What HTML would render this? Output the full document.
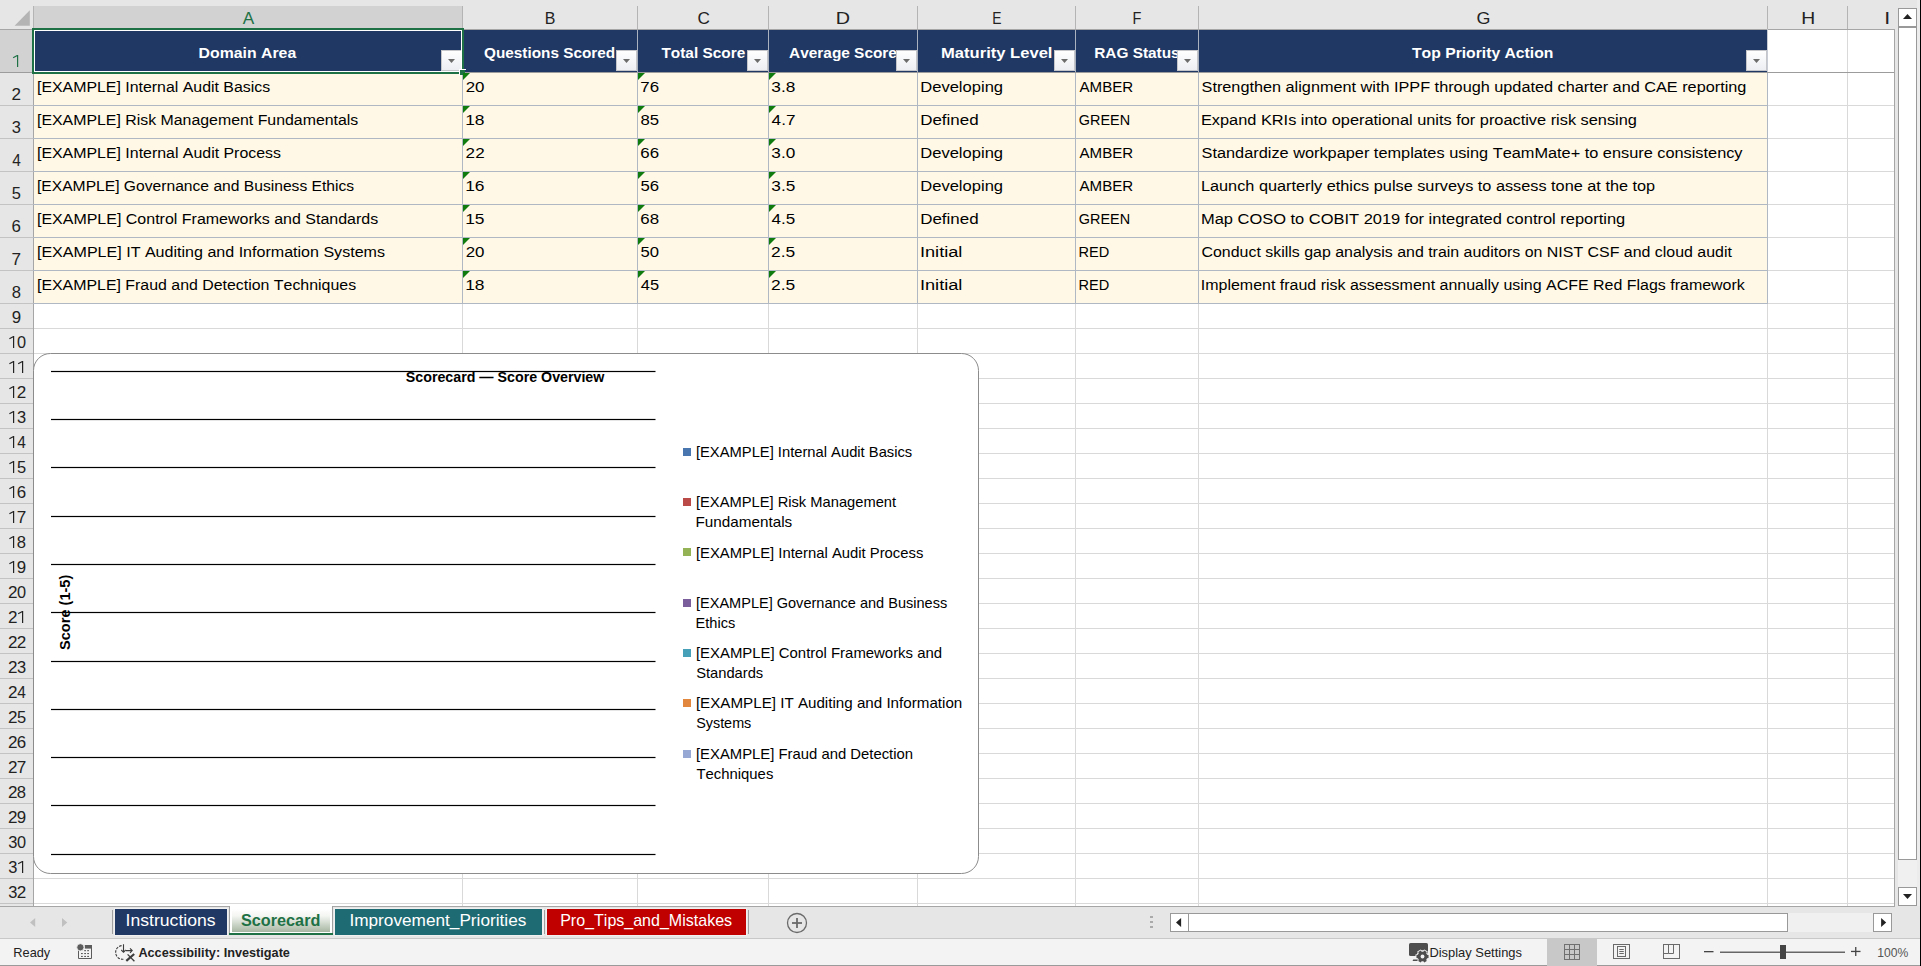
<!DOCTYPE html>
<html><head><meta charset="utf-8"><title>Scorecard</title>
<style>
html,body{margin:0;padding:0;background:#fff;overflow:hidden;}
svg{display:block;}
text{font-family:"Liberation Sans",sans-serif;font-kerning:none;font-variant-ligatures:none;white-space:pre;}
</style></head><body>
<svg width="1921" height="966" viewBox="0 0 1921 966" shape-rendering="auto">
<rect x="0" y="0" width="1921" height="966" fill="#ffffff" />
<rect x="0" y="0" width="1921" height="29" fill="#e6e6e6" />
<rect x="34" y="6" width="428" height="22" fill="#d2d2d2" />
<rect x="0" y="29" width="33" height="877" fill="#e6e6e6" />
<rect x="0" y="30" width="33" height="42" fill="#d2d2d2" />
<polygon points="14.6,25.8 29.8,25.8 29.8,10.2" fill="#b4b4b4"/>
<rect x="462" y="29" width="1" height="877" fill="#d9d9d9" />
<rect x="637" y="29" width="1" height="877" fill="#d9d9d9" />
<rect x="768" y="29" width="1" height="877" fill="#d9d9d9" />
<rect x="917" y="29" width="1" height="877" fill="#d9d9d9" />
<rect x="1075" y="29" width="1" height="877" fill="#d9d9d9" />
<rect x="1198" y="29" width="1" height="877" fill="#d9d9d9" />
<rect x="1767" y="29" width="1" height="877" fill="#d9d9d9" />
<rect x="1847" y="29" width="1" height="877" fill="#d9d9d9" />
<rect x="33" y="72" width="1861" height="1" fill="#d9d9d9" />
<rect x="33" y="105" width="1861" height="1" fill="#d9d9d9" />
<rect x="33" y="138" width="1861" height="1" fill="#d9d9d9" />
<rect x="33" y="171" width="1861" height="1" fill="#d9d9d9" />
<rect x="33" y="204" width="1861" height="1" fill="#d9d9d9" />
<rect x="33" y="237" width="1861" height="1" fill="#d9d9d9" />
<rect x="33" y="270" width="1861" height="1" fill="#d9d9d9" />
<rect x="33" y="303" width="1861" height="1" fill="#d9d9d9" />
<rect x="33" y="328" width="1861" height="1" fill="#d9d9d9" />
<rect x="33" y="353" width="1861" height="1" fill="#d9d9d9" />
<rect x="33" y="378" width="1861" height="1" fill="#d9d9d9" />
<rect x="33" y="403" width="1861" height="1" fill="#d9d9d9" />
<rect x="33" y="428" width="1861" height="1" fill="#d9d9d9" />
<rect x="33" y="453" width="1861" height="1" fill="#d9d9d9" />
<rect x="33" y="478" width="1861" height="1" fill="#d9d9d9" />
<rect x="33" y="503" width="1861" height="1" fill="#d9d9d9" />
<rect x="33" y="528" width="1861" height="1" fill="#d9d9d9" />
<rect x="33" y="553" width="1861" height="1" fill="#d9d9d9" />
<rect x="33" y="578" width="1861" height="1" fill="#d9d9d9" />
<rect x="33" y="603" width="1861" height="1" fill="#d9d9d9" />
<rect x="33" y="628" width="1861" height="1" fill="#d9d9d9" />
<rect x="33" y="653" width="1861" height="1" fill="#d9d9d9" />
<rect x="33" y="678" width="1861" height="1" fill="#d9d9d9" />
<rect x="33" y="703" width="1861" height="1" fill="#d9d9d9" />
<rect x="33" y="728" width="1861" height="1" fill="#d9d9d9" />
<rect x="33" y="753" width="1861" height="1" fill="#d9d9d9" />
<rect x="33" y="778" width="1861" height="1" fill="#d9d9d9" />
<rect x="33" y="803" width="1861" height="1" fill="#d9d9d9" />
<rect x="33" y="828" width="1861" height="1" fill="#d9d9d9" />
<rect x="33" y="853" width="1861" height="1" fill="#d9d9d9" />
<rect x="33" y="878" width="1861" height="1" fill="#d9d9d9" />
<rect x="33" y="903" width="1861" height="1" fill="#d9d9d9" />
<rect x="33" y="6" width="1" height="23" fill="#b4b4b4" />
<rect x="462" y="6" width="1" height="23" fill="#b4b4b4" />
<rect x="637" y="6" width="1" height="23" fill="#b4b4b4" />
<rect x="768" y="6" width="1" height="23" fill="#b4b4b4" />
<rect x="917" y="6" width="1" height="23" fill="#b4b4b4" />
<rect x="1075" y="6" width="1" height="23" fill="#b4b4b4" />
<rect x="1198" y="6" width="1" height="23" fill="#b4b4b4" />
<rect x="1767" y="6" width="1" height="23" fill="#b4b4b4" />
<rect x="1847" y="6" width="1" height="23" fill="#b4b4b4" />
<rect x="0" y="72" width="33" height="1" fill="#c3c3c3" />
<rect x="0" y="105" width="33" height="1" fill="#c3c3c3" />
<rect x="0" y="138" width="33" height="1" fill="#c3c3c3" />
<rect x="0" y="171" width="33" height="1" fill="#c3c3c3" />
<rect x="0" y="204" width="33" height="1" fill="#c3c3c3" />
<rect x="0" y="237" width="33" height="1" fill="#c3c3c3" />
<rect x="0" y="270" width="33" height="1" fill="#c3c3c3" />
<rect x="0" y="303" width="33" height="1" fill="#c3c3c3" />
<rect x="0" y="328" width="33" height="1" fill="#c3c3c3" />
<rect x="0" y="353" width="33" height="1" fill="#c3c3c3" />
<rect x="0" y="378" width="33" height="1" fill="#c3c3c3" />
<rect x="0" y="403" width="33" height="1" fill="#c3c3c3" />
<rect x="0" y="428" width="33" height="1" fill="#c3c3c3" />
<rect x="0" y="453" width="33" height="1" fill="#c3c3c3" />
<rect x="0" y="478" width="33" height="1" fill="#c3c3c3" />
<rect x="0" y="503" width="33" height="1" fill="#c3c3c3" />
<rect x="0" y="528" width="33" height="1" fill="#c3c3c3" />
<rect x="0" y="553" width="33" height="1" fill="#c3c3c3" />
<rect x="0" y="578" width="33" height="1" fill="#c3c3c3" />
<rect x="0" y="603" width="33" height="1" fill="#c3c3c3" />
<rect x="0" y="628" width="33" height="1" fill="#c3c3c3" />
<rect x="0" y="653" width="33" height="1" fill="#c3c3c3" />
<rect x="0" y="678" width="33" height="1" fill="#c3c3c3" />
<rect x="0" y="703" width="33" height="1" fill="#c3c3c3" />
<rect x="0" y="728" width="33" height="1" fill="#c3c3c3" />
<rect x="0" y="753" width="33" height="1" fill="#c3c3c3" />
<rect x="0" y="778" width="33" height="1" fill="#c3c3c3" />
<rect x="0" y="803" width="33" height="1" fill="#c3c3c3" />
<rect x="0" y="828" width="33" height="1" fill="#c3c3c3" />
<rect x="0" y="853" width="33" height="1" fill="#c3c3c3" />
<rect x="0" y="878" width="33" height="1" fill="#c3c3c3" />
<rect x="0" y="903" width="33" height="1" fill="#c3c3c3" />
<rect x="0" y="29" width="1895" height="1" fill="#a6a6a6" />
<rect x="33" y="29" width="1" height="877" fill="#a6a6a6" />
<rect x="1894" y="29" width="1" height="877" fill="#a6a6a6" />
<rect x="34" y="30" width="1733" height="42" fill="#203864" />
<rect x="34" y="73" width="1733" height="230" fill="#fff8e6" />
<rect x="462" y="30" width="1" height="274" fill="#b0b8c4" />
<rect x="637" y="30" width="1" height="274" fill="#b0b8c4" />
<rect x="768" y="30" width="1" height="274" fill="#b0b8c4" />
<rect x="917" y="30" width="1" height="274" fill="#b0b8c4" />
<rect x="1075" y="30" width="1" height="274" fill="#b0b8c4" />
<rect x="1198" y="30" width="1" height="274" fill="#b0b8c4" />
<rect x="1767" y="30" width="1" height="274" fill="#b0b8c4" />
<rect x="33" y="72" width="1735" height="1" fill="#b0b8c4" />
<rect x="33" y="105" width="1735" height="1" fill="#b0b8c4" />
<rect x="33" y="138" width="1735" height="1" fill="#b0b8c4" />
<rect x="33" y="171" width="1735" height="1" fill="#b0b8c4" />
<rect x="33" y="204" width="1735" height="1" fill="#b0b8c4" />
<rect x="33" y="237" width="1735" height="1" fill="#b0b8c4" />
<rect x="33" y="270" width="1735" height="1" fill="#b0b8c4" />
<rect x="33" y="303" width="1735" height="1" fill="#b0b8c4" />
<rect x="462" y="30" width="1" height="42" fill="#aab2c0" />
<rect x="637" y="30" width="1" height="42" fill="#aab2c0" />
<rect x="768" y="30" width="1" height="42" fill="#aab2c0" />
<rect x="917" y="30" width="1" height="42" fill="#aab2c0" />
<rect x="1075" y="30" width="1" height="42" fill="#aab2c0" />
<rect x="1198" y="30" width="1" height="42" fill="#aab2c0" />
<rect x="1767" y="29" width="1" height="43" fill="#c8ccd4" />
<rect x="0" y="72" width="1894" height="1" fill="#9c9c9c" />
<rect x="616.5" y="50.5" width="20" height="20" fill="url(#fb)" stroke="#c4c6ca" stroke-width="1"/>
<polygon points="623.0,59 630.0,59 626.5,63" fill="#6c6c6c"/>
<rect x="747.5" y="50.5" width="20" height="20" fill="url(#fb)" stroke="#c4c6ca" stroke-width="1"/>
<polygon points="754.0,59 761.0,59 757.5,63" fill="#6c6c6c"/>
<rect x="896.5" y="50.5" width="20" height="20" fill="url(#fb)" stroke="#c4c6ca" stroke-width="1"/>
<polygon points="903.0,59 910.0,59 906.5,63" fill="#6c6c6c"/>
<rect x="1054.5" y="50.5" width="20" height="20" fill="url(#fb)" stroke="#c4c6ca" stroke-width="1"/>
<polygon points="1061.0,59 1068.0,59 1064.5,63" fill="#6c6c6c"/>
<rect x="1177.5" y="50.5" width="20" height="20" fill="url(#fb)" stroke="#c4c6ca" stroke-width="1"/>
<polygon points="1184.0,59 1191.0,59 1187.5,63" fill="#6c6c6c"/>
<rect x="1746.5" y="50.5" width="20" height="20" fill="url(#fb)" stroke="#c4c6ca" stroke-width="1"/>
<polygon points="1753.0,59 1760.0,59 1756.5,63" fill="#6c6c6c"/>
<rect x="441.5" y="50.5" width="20" height="20" fill="url(#fb)" stroke="#c4c6ca" stroke-width="1"/>
<polygon points="448.0,59 455.0,59 451.5,63" fill="#6c6c6c"/>
<rect x="33" y="29" width="430" height="44" fill="none" stroke="#1e7145" stroke-width="2"/>
<rect x="34.5" y="30.5" width="427" height="41" fill="none" stroke="#ffffff" stroke-width="1"/>
<rect x="459" y="69" width="7" height="1" fill="#ffffff" />
<rect x="459" y="69" width="1" height="7" fill="#ffffff" />
<rect x="460" y="70" width="5" height="5" fill="#1e7145" />
<polygon points="463,73 470,73 463,80" fill="#0f7b0f"/>
<polygon points="638,73 645,73 638,80" fill="#0f7b0f"/>
<polygon points="769,73 776,73 769,80" fill="#0f7b0f"/>
<polygon points="463,106 470,106 463,113" fill="#0f7b0f"/>
<polygon points="638,106 645,106 638,113" fill="#0f7b0f"/>
<polygon points="769,106 776,106 769,113" fill="#0f7b0f"/>
<polygon points="463,139 470,139 463,146" fill="#0f7b0f"/>
<polygon points="638,139 645,139 638,146" fill="#0f7b0f"/>
<polygon points="769,139 776,139 769,146" fill="#0f7b0f"/>
<polygon points="463,172 470,172 463,179" fill="#0f7b0f"/>
<polygon points="638,172 645,172 638,179" fill="#0f7b0f"/>
<polygon points="769,172 776,172 769,179" fill="#0f7b0f"/>
<polygon points="463,205 470,205 463,212" fill="#0f7b0f"/>
<polygon points="638,205 645,205 638,212" fill="#0f7b0f"/>
<polygon points="769,205 776,205 769,212" fill="#0f7b0f"/>
<polygon points="463,238 470,238 463,245" fill="#0f7b0f"/>
<polygon points="638,238 645,238 638,245" fill="#0f7b0f"/>
<polygon points="769,238 776,238 769,245" fill="#0f7b0f"/>
<polygon points="463,271 470,271 463,278" fill="#0f7b0f"/>
<polygon points="638,271 645,271 638,278" fill="#0f7b0f"/>
<polygon points="769,271 776,271 769,278" fill="#0f7b0f"/>
<text x="198.64" y="57.90" font-size="15.5" font-weight="bold" fill="#fff" textLength="97.56" lengthAdjust="spacingAndGlyphs" >Domain Area</text>
<text x="484.07" y="57.90" font-size="15.5" font-weight="bold" fill="#fff" textLength="131.04" lengthAdjust="spacingAndGlyphs" >Questions Scored</text>
<text x="661.43" y="57.90" font-size="15.5" font-weight="bold" fill="#fff" textLength="83.80" lengthAdjust="spacingAndGlyphs" >Total Score</text>
<text x="789.12" y="57.90" font-size="15.5" font-weight="bold" fill="#fff" textLength="107.77" lengthAdjust="spacingAndGlyphs" >Average Score</text>
<text x="941.09" y="57.90" font-size="15.5" font-weight="bold" fill="#fff" textLength="111.38" lengthAdjust="spacingAndGlyphs" >Maturity Level</text>
<text x="1094.17" y="57.90" font-size="15.5" font-weight="bold" fill="#fff" textLength="85.50" lengthAdjust="spacingAndGlyphs" >RAG Status</text>
<text x="1412.02" y="57.90" font-size="15.5" font-weight="bold" fill="#fff" textLength="141.35" lengthAdjust="spacingAndGlyphs" >Top Priority Action</text>
<rect x="896.5" y="50.5" width="20" height="20" fill="url(#fb)" stroke="#c4c6ca" stroke-width="1"/>
<polygon points="903.0,59 910.0,59 906.5,63" fill="#6c6c6c"/>
<rect x="1177.5" y="50.5" width="20" height="20" fill="url(#fb)" stroke="#c4c6ca" stroke-width="1"/>
<polygon points="1184.0,59 1191.0,59 1187.5,63" fill="#6c6c6c"/>
<text x="36.97" y="92.00" font-size="15.5" fill="#000000" textLength="233.21" lengthAdjust="spacingAndGlyphs" >[EXAMPLE] Internal Audit Basics</text>
<text x="465.65" y="92.00" font-size="15.5" fill="#000000" textLength="18.81" lengthAdjust="spacingAndGlyphs" >20</text>
<text x="640.33" y="92.00" font-size="15.5" fill="#000000" textLength="18.81" lengthAdjust="spacingAndGlyphs" >76</text>
<text x="771.34" y="92.00" font-size="15.5" fill="#000000" textLength="24.01" lengthAdjust="spacingAndGlyphs" >3.8</text>
<text x="920.24" y="92.00" font-size="15.5" fill="#000000" textLength="82.82" lengthAdjust="spacingAndGlyphs" >Developing</text>
<text x="1079.57" y="92.00" font-size="15.5" fill="#000000" textLength="53.63" lengthAdjust="spacingAndGlyphs" >AMBER</text>
<text x="1201.56" y="92.00" font-size="15.5" fill="#000000" textLength="544.79" lengthAdjust="spacingAndGlyphs" >Strengthen alignment with IPPF through updated charter and CAE reporting</text>
<text x="36.97" y="125.00" font-size="15.5" fill="#000000" textLength="321.31" lengthAdjust="spacingAndGlyphs" >[EXAMPLE] Risk Management Fundamentals</text>
<text x="465.17" y="125.00" font-size="15.5" fill="#000000" textLength="19.38" lengthAdjust="spacingAndGlyphs" >18</text>
<text x="640.47" y="125.00" font-size="15.5" fill="#000000" textLength="18.63" lengthAdjust="spacingAndGlyphs" >85</text>
<text x="771.61" y="125.00" font-size="15.5" fill="#000000" textLength="23.86" lengthAdjust="spacingAndGlyphs" >4.7</text>
<text x="920.21" y="125.00" font-size="15.5" fill="#000000" textLength="58.38" lengthAdjust="spacingAndGlyphs" >Defined</text>
<text x="1078.87" y="125.00" font-size="15.5" fill="#000000" textLength="51.30" lengthAdjust="spacingAndGlyphs" >GREEN</text>
<text x="1200.96" y="125.00" font-size="15.5" fill="#000000" textLength="435.99" lengthAdjust="spacingAndGlyphs" >Expand KRIs into operational units for proactive risk sensing</text>
<text x="36.97" y="158.00" font-size="15.5" fill="#000000" textLength="244.01" lengthAdjust="spacingAndGlyphs" >[EXAMPLE] Internal Audit Process</text>
<text x="465.64" y="158.00" font-size="15.5" fill="#000000" textLength="19.02" lengthAdjust="spacingAndGlyphs" >22</text>
<text x="640.34" y="158.00" font-size="15.5" fill="#000000" textLength="18.80" lengthAdjust="spacingAndGlyphs" >66</text>
<text x="771.34" y="158.00" font-size="15.5" fill="#000000" textLength="23.93" lengthAdjust="spacingAndGlyphs" >3.0</text>
<text x="920.24" y="158.00" font-size="15.5" fill="#000000" textLength="82.82" lengthAdjust="spacingAndGlyphs" >Developing</text>
<text x="1079.57" y="158.00" font-size="15.5" fill="#000000" textLength="53.63" lengthAdjust="spacingAndGlyphs" >AMBER</text>
<text x="1201.56" y="158.00" font-size="15.5" fill="#000000" textLength="540.97" lengthAdjust="spacingAndGlyphs" >Standardize workpaper templates using TeamMate+ to ensure consistency</text>
<text x="36.99" y="191.00" font-size="15.5" fill="#000000" textLength="317.18" lengthAdjust="spacingAndGlyphs" >[EXAMPLE] Governance and Business Ethics</text>
<text x="465.17" y="191.00" font-size="15.5" fill="#000000" textLength="19.39" lengthAdjust="spacingAndGlyphs" >16</text>
<text x="640.53" y="191.00" font-size="15.5" fill="#000000" textLength="18.60" lengthAdjust="spacingAndGlyphs" >56</text>
<text x="771.34" y="191.00" font-size="15.5" fill="#000000" textLength="23.98" lengthAdjust="spacingAndGlyphs" >3.5</text>
<text x="920.24" y="191.00" font-size="15.5" fill="#000000" textLength="82.82" lengthAdjust="spacingAndGlyphs" >Developing</text>
<text x="1079.57" y="191.00" font-size="15.5" fill="#000000" textLength="53.63" lengthAdjust="spacingAndGlyphs" >AMBER</text>
<text x="1200.96" y="191.00" font-size="15.5" fill="#000000" textLength="454.22" lengthAdjust="spacingAndGlyphs" >Launch quarterly ethics pulse surveys to assess tone at the top</text>
<text x="36.96" y="224.00" font-size="15.5" fill="#000000" textLength="341.22" lengthAdjust="spacingAndGlyphs" >[EXAMPLE] Control Frameworks and Standards</text>
<text x="465.17" y="224.00" font-size="15.5" fill="#000000" textLength="19.36" lengthAdjust="spacingAndGlyphs" >15</text>
<text x="640.34" y="224.00" font-size="15.5" fill="#000000" textLength="18.79" lengthAdjust="spacingAndGlyphs" >68</text>
<text x="771.61" y="224.00" font-size="15.5" fill="#000000" textLength="23.71" lengthAdjust="spacingAndGlyphs" >4.5</text>
<text x="920.21" y="224.00" font-size="15.5" fill="#000000" textLength="58.38" lengthAdjust="spacingAndGlyphs" >Defined</text>
<text x="1078.87" y="224.00" font-size="15.5" fill="#000000" textLength="51.30" lengthAdjust="spacingAndGlyphs" >GREEN</text>
<text x="1200.95" y="224.00" font-size="15.5" fill="#000000" textLength="424.31" lengthAdjust="spacingAndGlyphs" >Map COSO to COBIT 2019 for integrated control reporting</text>
<text x="36.96" y="257.00" font-size="15.5" fill="#000000" textLength="348.02" lengthAdjust="spacingAndGlyphs" >[EXAMPLE] IT Auditing and Information Systems</text>
<text x="465.65" y="257.00" font-size="15.5" fill="#000000" textLength="18.81" lengthAdjust="spacingAndGlyphs" >20</text>
<text x="640.53" y="257.00" font-size="15.5" fill="#000000" textLength="18.52" lengthAdjust="spacingAndGlyphs" >50</text>
<text x="771.12" y="257.00" font-size="15.5" fill="#000000" textLength="24.21" lengthAdjust="spacingAndGlyphs" >2.5</text>
<text x="919.92" y="257.00" font-size="15.5" fill="#000000" textLength="42.50" lengthAdjust="spacingAndGlyphs" >Initial</text>
<text x="1078.40" y="257.00" font-size="15.5" fill="#000000" textLength="30.79" lengthAdjust="spacingAndGlyphs" >RED</text>
<text x="1201.49" y="257.00" font-size="15.5" fill="#000000" textLength="530.43" lengthAdjust="spacingAndGlyphs" >Conduct skills gap analysis and train auditors on NIST CSF and cloud audit</text>
<text x="36.97" y="290.00" font-size="15.5" fill="#000000" textLength="319.11" lengthAdjust="spacingAndGlyphs" >[EXAMPLE] Fraud and Detection Techniques</text>
<text x="465.17" y="290.00" font-size="15.5" fill="#000000" textLength="19.38" lengthAdjust="spacingAndGlyphs" >18</text>
<text x="640.82" y="290.00" font-size="15.5" fill="#000000" textLength="18.27" lengthAdjust="spacingAndGlyphs" >45</text>
<text x="771.12" y="290.00" font-size="15.5" fill="#000000" textLength="24.21" lengthAdjust="spacingAndGlyphs" >2.5</text>
<text x="919.92" y="290.00" font-size="15.5" fill="#000000" textLength="42.50" lengthAdjust="spacingAndGlyphs" >Initial</text>
<text x="1078.40" y="290.00" font-size="15.5" fill="#000000" textLength="30.79" lengthAdjust="spacingAndGlyphs" >RED</text>
<text x="1200.83" y="290.00" font-size="15.5" fill="#000000" textLength="543.95" lengthAdjust="spacingAndGlyphs" >Implement fraud risk assessment annually using ACFE Red Flags framework</text>
<text x="242.77" y="24.00" font-size="17" fill="#1e7145" textLength="11.47" lengthAdjust="spacingAndGlyphs" >A</text>
<text x="544.69" y="24.00" font-size="17" fill="#222222" textLength="10.65" lengthAdjust="spacingAndGlyphs" >B</text>
<text x="697.43" y="24.00" font-size="17" fill="#222222" textLength="12.43" lengthAdjust="spacingAndGlyphs" >C</text>
<text x="835.88" y="24.00" font-size="17" fill="#222222" textLength="14.27" lengthAdjust="spacingAndGlyphs" >D</text>
<text x="992.16" y="24.00" font-size="17" fill="#222222" textLength="9.23" lengthAdjust="spacingAndGlyphs" >E</text>
<text x="1132.51" y="24.00" font-size="17" fill="#222222" textLength="8.87" lengthAdjust="spacingAndGlyphs" >F</text>
<text x="1476.40" y="24.00" font-size="17" fill="#222222" textLength="13.94" lengthAdjust="spacingAndGlyphs" >G</text>
<text x="1801.21" y="24.00" font-size="17" fill="#222222" textLength="13.96" lengthAdjust="spacingAndGlyphs" >H</text>
<text x="1884.32" y="24.00" font-size="17" fill="#222222" textLength="5.96" lengthAdjust="spacingAndGlyphs" >I</text>
<rect x="17" y="55" width="1.2" height="12" fill="#1e7145"/>
<path d="M13.10,57.70 L17.30,55.40" stroke="#1e7145" stroke-width="1.15" fill="none"/>
<text x="11.64" y="100.00" font-size="16.5" fill="#222222" textLength="9.52" lengthAdjust="spacingAndGlyphs" >2</text>
<text x="11.87" y="133.00" font-size="16.5" fill="#222222" textLength="9.15" lengthAdjust="spacingAndGlyphs" >3</text>
<text x="12.14" y="166.00" font-size="16.5" fill="#222222" textLength="8.61" lengthAdjust="spacingAndGlyphs" >4</text>
<text x="11.84" y="199.00" font-size="16.5" fill="#222222" textLength="9.15" lengthAdjust="spacingAndGlyphs" >5</text>
<text x="11.64" y="232.00" font-size="16.5" fill="#222222" textLength="9.40" lengthAdjust="spacingAndGlyphs" >6</text>
<text x="11.62" y="265.00" font-size="16.5" fill="#222222" textLength="9.54" lengthAdjust="spacingAndGlyphs" >7</text>
<text x="11.78" y="298.00" font-size="16.5" fill="#222222" textLength="9.24" lengthAdjust="spacingAndGlyphs" >8</text>
<text x="11.71" y="323.00" font-size="16.5" fill="#222222" textLength="9.39" lengthAdjust="spacingAndGlyphs" >9</text>
<rect x="13" y="336" width="1.2" height="12" fill="#222222"/>
<path d="M9.40,338.70 L13.60,336.40" stroke="#222222" stroke-width="1.15" fill="none"/>
<text x="16.96" y="348.00" font-size="16.5" fill="#222222" textLength="9.07" lengthAdjust="spacingAndGlyphs" >0</text>
<rect x="13" y="361" width="1.2" height="12" fill="#222222"/>
<path d="M9.40,363.70 L13.60,361.40" stroke="#222222" stroke-width="1.15" fill="none"/>
<rect x="22" y="361" width="1.2" height="12" fill="#222222"/>
<path d="M18.20,363.70 L22.40,361.40" stroke="#222222" stroke-width="1.15" fill="none"/>
<rect x="13" y="386" width="1.2" height="12" fill="#222222"/>
<path d="M9.40,388.70 L13.60,386.40" stroke="#222222" stroke-width="1.15" fill="none"/>
<text x="16.74" y="398.00" font-size="16.5" fill="#222222" textLength="9.52" lengthAdjust="spacingAndGlyphs" >2</text>
<rect x="13" y="411" width="1.2" height="12" fill="#222222"/>
<path d="M9.40,413.70 L13.60,411.40" stroke="#222222" stroke-width="1.15" fill="none"/>
<text x="16.97" y="423.00" font-size="16.5" fill="#222222" textLength="9.15" lengthAdjust="spacingAndGlyphs" >3</text>
<rect x="13" y="436" width="1.2" height="12" fill="#222222"/>
<path d="M9.40,438.70 L13.60,436.40" stroke="#222222" stroke-width="1.15" fill="none"/>
<text x="17.24" y="448.00" font-size="16.5" fill="#222222" textLength="8.61" lengthAdjust="spacingAndGlyphs" >4</text>
<rect x="13" y="461" width="1.2" height="12" fill="#222222"/>
<path d="M9.40,463.70 L13.60,461.40" stroke="#222222" stroke-width="1.15" fill="none"/>
<text x="16.94" y="473.00" font-size="16.5" fill="#222222" textLength="9.15" lengthAdjust="spacingAndGlyphs" >5</text>
<rect x="13" y="486" width="1.2" height="12" fill="#222222"/>
<path d="M9.40,488.70 L13.60,486.40" stroke="#222222" stroke-width="1.15" fill="none"/>
<text x="16.74" y="498.00" font-size="16.5" fill="#222222" textLength="9.40" lengthAdjust="spacingAndGlyphs" >6</text>
<rect x="13" y="511" width="1.2" height="12" fill="#222222"/>
<path d="M9.40,513.70 L13.60,511.40" stroke="#222222" stroke-width="1.15" fill="none"/>
<text x="16.72" y="523.00" font-size="16.5" fill="#222222" textLength="9.54" lengthAdjust="spacingAndGlyphs" >7</text>
<rect x="13" y="536" width="1.2" height="12" fill="#222222"/>
<path d="M9.40,538.70 L13.60,536.40" stroke="#222222" stroke-width="1.15" fill="none"/>
<text x="16.88" y="548.00" font-size="16.5" fill="#222222" textLength="9.24" lengthAdjust="spacingAndGlyphs" >8</text>
<rect x="13" y="561" width="1.2" height="12" fill="#222222"/>
<path d="M9.40,563.70 L13.60,561.40" stroke="#222222" stroke-width="1.15" fill="none"/>
<text x="16.81" y="573.00" font-size="16.5" fill="#222222" textLength="9.39" lengthAdjust="spacingAndGlyphs" >9</text>
<text x="7.94" y="598.00" font-size="16.5" fill="#222222" textLength="9.52" lengthAdjust="spacingAndGlyphs" >2</text>
<text x="16.96" y="598.00" font-size="16.5" fill="#222222" textLength="9.07" lengthAdjust="spacingAndGlyphs" >0</text>
<text x="7.94" y="623.00" font-size="16.5" fill="#222222" textLength="9.52" lengthAdjust="spacingAndGlyphs" >2</text>
<rect x="22" y="611" width="1.2" height="12" fill="#222222"/>
<path d="M18.20,613.70 L22.40,611.40" stroke="#222222" stroke-width="1.15" fill="none"/>
<text x="7.94" y="648.00" font-size="16.5" fill="#222222" textLength="9.52" lengthAdjust="spacingAndGlyphs" >2</text>
<text x="16.74" y="648.00" font-size="16.5" fill="#222222" textLength="9.52" lengthAdjust="spacingAndGlyphs" >2</text>
<text x="7.94" y="673.00" font-size="16.5" fill="#222222" textLength="9.52" lengthAdjust="spacingAndGlyphs" >2</text>
<text x="16.97" y="673.00" font-size="16.5" fill="#222222" textLength="9.15" lengthAdjust="spacingAndGlyphs" >3</text>
<text x="7.94" y="698.00" font-size="16.5" fill="#222222" textLength="9.52" lengthAdjust="spacingAndGlyphs" >2</text>
<text x="17.24" y="698.00" font-size="16.5" fill="#222222" textLength="8.61" lengthAdjust="spacingAndGlyphs" >4</text>
<text x="7.94" y="723.00" font-size="16.5" fill="#222222" textLength="9.52" lengthAdjust="spacingAndGlyphs" >2</text>
<text x="16.94" y="723.00" font-size="16.5" fill="#222222" textLength="9.15" lengthAdjust="spacingAndGlyphs" >5</text>
<text x="7.94" y="748.00" font-size="16.5" fill="#222222" textLength="9.52" lengthAdjust="spacingAndGlyphs" >2</text>
<text x="16.74" y="748.00" font-size="16.5" fill="#222222" textLength="9.40" lengthAdjust="spacingAndGlyphs" >6</text>
<text x="7.94" y="773.00" font-size="16.5" fill="#222222" textLength="9.52" lengthAdjust="spacingAndGlyphs" >2</text>
<text x="16.72" y="773.00" font-size="16.5" fill="#222222" textLength="9.54" lengthAdjust="spacingAndGlyphs" >7</text>
<text x="7.94" y="798.00" font-size="16.5" fill="#222222" textLength="9.52" lengthAdjust="spacingAndGlyphs" >2</text>
<text x="16.88" y="798.00" font-size="16.5" fill="#222222" textLength="9.24" lengthAdjust="spacingAndGlyphs" >8</text>
<text x="7.94" y="823.00" font-size="16.5" fill="#222222" textLength="9.52" lengthAdjust="spacingAndGlyphs" >2</text>
<text x="16.81" y="823.00" font-size="16.5" fill="#222222" textLength="9.39" lengthAdjust="spacingAndGlyphs" >9</text>
<text x="8.17" y="848.00" font-size="16.5" fill="#222222" textLength="9.15" lengthAdjust="spacingAndGlyphs" >3</text>
<text x="16.96" y="848.00" font-size="16.5" fill="#222222" textLength="9.07" lengthAdjust="spacingAndGlyphs" >0</text>
<text x="8.17" y="873.00" font-size="16.5" fill="#222222" textLength="9.15" lengthAdjust="spacingAndGlyphs" >3</text>
<rect x="22" y="861" width="1.2" height="12" fill="#222222"/>
<path d="M18.20,863.70 L22.40,861.40" stroke="#222222" stroke-width="1.15" fill="none"/>
<text x="8.17" y="898.00" font-size="16.5" fill="#222222" textLength="9.15" lengthAdjust="spacingAndGlyphs" >3</text>
<text x="16.74" y="898.00" font-size="16.5" fill="#222222" textLength="9.52" lengthAdjust="spacingAndGlyphs" >2</text>
<rect x="33.5" y="353.5" width="945" height="520" rx="17" ry="17" fill="#ffffff" stroke="#8c8c8c" stroke-width="1"/>
<rect x="51" y="371" width="604.5" height="1" fill="#000"/>
<rect x="51" y="370" width="604.5" height="1" fill="#000" fill-opacity="0.1"/>
<rect x="51" y="372" width="604.5" height="1" fill="#000" fill-opacity="0.1"/>
<rect x="51" y="419" width="604.5" height="1" fill="#000"/>
<rect x="51" y="418" width="604.5" height="1" fill="#000" fill-opacity="0.1"/>
<rect x="51" y="420" width="604.5" height="1" fill="#000" fill-opacity="0.1"/>
<rect x="51" y="467" width="604.5" height="1" fill="#000"/>
<rect x="51" y="466" width="604.5" height="1" fill="#000" fill-opacity="0.1"/>
<rect x="51" y="468" width="604.5" height="1" fill="#000" fill-opacity="0.1"/>
<rect x="51" y="516" width="604.5" height="1" fill="#000"/>
<rect x="51" y="515" width="604.5" height="1" fill="#000" fill-opacity="0.1"/>
<rect x="51" y="517" width="604.5" height="1" fill="#000" fill-opacity="0.1"/>
<rect x="51" y="564" width="604.5" height="1" fill="#000"/>
<rect x="51" y="563" width="604.5" height="1" fill="#000" fill-opacity="0.1"/>
<rect x="51" y="565" width="604.5" height="1" fill="#000" fill-opacity="0.1"/>
<rect x="51" y="612" width="604.5" height="1" fill="#000"/>
<rect x="51" y="611" width="604.5" height="1" fill="#000" fill-opacity="0.1"/>
<rect x="51" y="613" width="604.5" height="1" fill="#000" fill-opacity="0.1"/>
<rect x="51" y="661" width="604.5" height="1" fill="#000"/>
<rect x="51" y="660" width="604.5" height="1" fill="#000" fill-opacity="0.1"/>
<rect x="51" y="662" width="604.5" height="1" fill="#000" fill-opacity="0.1"/>
<rect x="51" y="709" width="604.5" height="1" fill="#000"/>
<rect x="51" y="708" width="604.5" height="1" fill="#000" fill-opacity="0.1"/>
<rect x="51" y="710" width="604.5" height="1" fill="#000" fill-opacity="0.1"/>
<rect x="51" y="757" width="604.5" height="1" fill="#000"/>
<rect x="51" y="756" width="604.5" height="1" fill="#000" fill-opacity="0.1"/>
<rect x="51" y="758" width="604.5" height="1" fill="#000" fill-opacity="0.1"/>
<rect x="51" y="805" width="604.5" height="1" fill="#000"/>
<rect x="51" y="804" width="604.5" height="1" fill="#000" fill-opacity="0.1"/>
<rect x="51" y="806" width="604.5" height="1" fill="#000" fill-opacity="0.1"/>
<rect x="51" y="854" width="604.5" height="1" fill="#000"/>
<rect x="51" y="853" width="604.5" height="1" fill="#000" fill-opacity="0.1"/>
<rect x="51" y="855" width="604.5" height="1" fill="#000" fill-opacity="0.1"/>
<text x="405.79" y="382.00" font-size="15" font-weight="bold" fill="#000" textLength="198.58" lengthAdjust="spacingAndGlyphs" >Scorecard — Score Overview</text>
<g transform="translate(70.3,649.5) rotate(-90)">
<text x="-0.42" y="0" font-size="15" font-weight="bold" fill="#000" textLength="75.14" lengthAdjust="spacingAndGlyphs">Score (1-5)</text>
</g>
<rect x="683" y="448" width="8" height="8" fill="#4a76b0" />
<text x="695.95" y="457.20" font-size="15" fill="#000" textLength="216.28" lengthAdjust="spacingAndGlyphs" >[EXAMPLE] Internal Audit Basics</text>
<rect x="683" y="498" width="8" height="8" fill="#b94a48" />
<text x="695.95" y="507.45" font-size="15" fill="#000" textLength="200.16" lengthAdjust="spacingAndGlyphs" >[EXAMPLE] Risk Management</text>
<text x="695.55" y="527.45" font-size="15" fill="#000" textLength="96.70" lengthAdjust="spacingAndGlyphs" >Fundamentals</text>
<rect x="683" y="548" width="8" height="8" fill="#94b354" />
<text x="695.94" y="557.70" font-size="15" fill="#000" textLength="227.39" lengthAdjust="spacingAndGlyphs" >[EXAMPLE] Internal Audit Process</text>
<rect x="683" y="599" width="8" height="8" fill="#7a5e9c" />
<text x="695.96" y="607.95" font-size="15" fill="#000" textLength="251.26" lengthAdjust="spacingAndGlyphs" >[EXAMPLE] Governance and Business</text>
<text x="695.60" y="627.95" font-size="15" fill="#000" textLength="39.72" lengthAdjust="spacingAndGlyphs" >Ethics</text>
<rect x="683" y="649" width="8" height="8" fill="#46a0b8" />
<text x="695.94" y="658.20" font-size="15" fill="#000" textLength="246.12" lengthAdjust="spacingAndGlyphs" >[EXAMPLE] Control Frameworks and</text>
<text x="696.13" y="678.20" font-size="15" fill="#000" textLength="67.10" lengthAdjust="spacingAndGlyphs" >Standards</text>
<rect x="683" y="699" width="8" height="8" fill="#e2873e" />
<text x="695.92" y="708.45" font-size="15" fill="#000" textLength="266.37" lengthAdjust="spacingAndGlyphs" >[EXAMPLE] IT Auditing and Information</text>
<text x="696.15" y="728.45" font-size="15" fill="#000" textLength="55.17" lengthAdjust="spacingAndGlyphs" >Systems</text>
<rect x="683" y="750" width="8" height="8" fill="#98a8d4" />
<text x="695.94" y="758.70" font-size="15" fill="#000" textLength="217.12" lengthAdjust="spacingAndGlyphs" >[EXAMPLE] Fraud and Detection</text>
<text x="696.47" y="778.70" font-size="15" fill="#000" textLength="76.87" lengthAdjust="spacingAndGlyphs" >Techniques</text>
<rect x="1895" y="0" width="25" height="906" fill="#e6e6e6" />
<rect x="1917" y="0" width="3" height="906" fill="#ececec" />
<rect x="1920" y="0" width="1" height="966" fill="#000000" />
<rect x="1898" y="860" width="19" height="28" fill="#f0f0f0" />
<rect x="1898.5" y="8.5" width="18" height="18" fill="#ffffff" stroke="#999999" stroke-width="1"/>
<polygon points="1903,19 1912,19 1907.5,14" fill="#222"/>
<rect x="1898.5" y="27.5" width="18" height="832" fill="#ffffff" stroke="#999999" stroke-width="1"/>
<rect x="1898.5" y="887.5" width="18" height="18" fill="#ffffff" stroke="#999999" stroke-width="1"/>
<polygon points="1903,894 1912,894 1907.5,899" fill="#222"/>
<rect x="0" y="906" width="1920" height="33" fill="#e6e6e6" />
<rect x="0" y="906" width="1895" height="1" fill="#a6a6a6" />
<polygon points="35.2,918 35.2,927 30,922.5" fill="#c0c0c0"/>
<polygon points="62,918 62,927 67.3,922.5" fill="#c0c0c0"/>
<rect x="112" y="910" width="1" height="24" fill="#a0a0a0" />
<rect x="114" y="908" width="114" height="28" fill="#f0f0f0" />
<rect x="115" y="909" width="112" height="26" fill="#203864" />
<text x="125.57" y="925.90" font-size="17" fill="#ffffff" textLength="90.06" lengthAdjust="spacingAndGlyphs" >Instructions</text>
<rect x="229" y="906" width="104" height="29" fill="#ffffff" />
<rect x="229" y="906" width="1" height="29" fill="#a0a0a0" />
<rect x="332" y="906" width="1" height="29" fill="#a0a0a0" />
<defs><linearGradient id="tg" x1="0" y1="0" x2="0" y2="1"><stop offset="0" stop-color="#ffffff"/><stop offset="0.3" stop-color="#f4f6f2"/><stop offset="1" stop-color="#a7b6a2"/></linearGradient><linearGradient id="fb" x1="0" y1="0" x2="0" y2="1"><stop offset="0" stop-color="#ffffff"/><stop offset="1" stop-color="#eceef2"/></linearGradient></defs>
<rect x="232" y="909" width="98" height="23" fill="url(#tg)" />
<rect x="229" y="933" width="104" height="2" fill="#1e7145" />
<text x="241.03" y="925.70" font-size="16.8" font-weight="bold" fill="#1e7145" textLength="79.34" lengthAdjust="spacingAndGlyphs" >Scorecard</text>
<rect x="334" y="908" width="210" height="28" fill="#f0f0f0" />
<rect x="335" y="909" width="207" height="26" fill="#1e6b74" />
<text x="349.41" y="925.90" font-size="17" fill="#ffffff" textLength="176.91" lengthAdjust="spacingAndGlyphs" >Improvement_Priorities</text>
<rect x="544" y="910" width="1" height="24" fill="#a0a0a0" />
<rect x="546" y="908" width="201" height="28" fill="#f0f0f0" />
<rect x="547" y="909" width="199" height="26" fill="#c00000" />
<text x="560.19" y="925.90" font-size="17" fill="#ffffff" textLength="171.89" lengthAdjust="spacingAndGlyphs" >Pro_Tips_and_Mistakes</text>
<rect x="748" y="910" width="1" height="24" fill="#a0a0a0" />
<circle cx="797" cy="923" r="9.5" fill="none" stroke="#6a6a6a" stroke-width="1.3"/>
<rect x="792" y="922.1" width="10" height="1.8" fill="#6a6a6a" />
<rect x="796.1" y="918" width="1.8" height="10" fill="#6a6a6a" />
<rect x="1150" y="916" width="3" height="2" fill="#aaaaaa" />
<rect x="1150" y="921" width="3" height="2" fill="#aaaaaa" />
<rect x="1150" y="926" width="3" height="2" fill="#aaaaaa" />
<rect x="1188" y="913" width="686" height="19" fill="#f0f0f0" />
<rect x="1170.5" y="913.5" width="18" height="18" fill="#ffffff" stroke="#999999" stroke-width="1"/>
<polygon points="1181.1,918 1181.1,927 1176,922.5" fill="#222"/>
<rect x="1188.5" y="913.5" width="599" height="18" fill="#ffffff" stroke="#999999" stroke-width="1"/>
<rect x="1873.5" y="913.5" width="18" height="18" fill="#ffffff" stroke="#999999" stroke-width="1"/>
<polygon points="1881.1,918 1881.1,927 1886.2,922.5" fill="#222"/>
<rect x="0" y="939" width="1920" height="27" fill="#f3f3f3" />
<rect x="0" y="938" width="1920" height="1" fill="#c8c8c8" />
<rect x="0" y="965" width="1920" height="1" fill="#9a9a9a" />
<text x="13.35" y="956.70" font-size="13" fill="#222" textLength="36.87" lengthAdjust="spacingAndGlyphs" >Ready</text>
<g fill="none" stroke="#5c5c5c" stroke-width="1"><path d="M78.5,950.5 V958.5 H91.5 V948"/></g><rect x="84.8" y="945" width="7.2" height="3.6" fill="#5c5c5c"/><circle cx="80.4" cy="947.3" r="3.6" fill="#5c5c5c" stroke="#f3f3f3" stroke-width="0.8"/><g fill="#5c5c5c"><rect x="84.2" y="950.1" width="1.8" height="1.1"/><rect x="87.2" y="950.1" width="1.8" height="1.1"/><rect x="81" y="953" width="1.8" height="1.1"/><rect x="84.2" y="953" width="1.8" height="1.1"/><rect x="87.2" y="953" width="1.8" height="1.1"/><rect x="81" y="955.9" width="1.8" height="1.1"/><rect x="84.2" y="955.9" width="1.8" height="1.1"/><rect x="87.2" y="955.9" width="1.8" height="1.1"/></g>
<g fill="none" stroke="#3c3c3c" stroke-width="1.1"><path d="M121.6,945.6 A6.8,6.8 0 0 0 123.4,959.2" stroke-dasharray="2.6,1.2"/><path d="M123.5,944.2 V952 M121.3,950 L123.5,952.3 L125.7,950"/><path d="M126,950.6 H132 M130,948.4 L132.2,950.6 L130,952.8"/><path d="M127.6,954.4 L134.4,961.3" stroke-width="1.3"/><path d="M126.3,960.8 L134.2,954" stroke-width="2.2"/></g>
<text x="138.38" y="956.60" font-size="13" font-weight="bold" fill="#222" textLength="151.55" lengthAdjust="spacingAndGlyphs" >Accessibility: Investigate</text>
<rect x="1409" y="943" width="19" height="13" rx="1.6" fill="#4e4e4e"/><polygon points="1428.25,958.82 1429.52,958.51 1429.52,954.49 1428.25,954.18 1427.39,952.68 1427.75,951.43 1424.27,949.42 1423.36,950.36 1421.64,950.36 1420.73,949.42 1417.25,951.43 1417.61,952.68 1416.75,954.18 1415.48,954.49 1415.48,958.51 1416.75,958.82 1417.61,960.32 1417.25,961.57 1420.73,963.58 1421.64,962.64 1423.36,962.64 1424.27,963.58 1427.75,961.57 1427.39,960.32" fill="#f3f3f3"/><polygon points="1413.2,959.4 1417.8,959.4 1417.4,961 1412.6,961" fill="#4e4e4e"/><polygon points="1427.10,958.18 1428.54,957.89 1428.54,955.11 1427.10,954.82 1426.25,953.35 1426.73,951.97 1424.31,950.57 1423.35,951.67 1421.65,951.67 1420.69,950.57 1418.27,951.97 1418.75,953.35 1417.90,954.82 1416.46,955.11 1416.46,957.89 1417.90,958.18 1418.75,959.65 1418.27,961.03 1420.69,962.43 1421.65,961.33 1423.35,961.33 1424.31,962.43 1426.73,961.03 1426.25,959.65" fill="#4e4e4e"/><circle cx="1422.5" cy="956.5" r="1.9" fill="#f3f3f3"/>
<text x="1429.44" y="957.10" font-size="13" fill="#222" textLength="92.52" lengthAdjust="spacingAndGlyphs" >Display Settings</text>
<rect x="1547" y="939" width="50" height="27" fill="#c8c8c8" />
<g fill="none" stroke="#707070" stroke-width="1"><rect x="1564.5" y="944.5" width="15" height="15"/><path d="M1569.5,944.5 V959.5 M1574.5,944.5 V959.5 M1564.5,949.5 H1579.5 M1564.5,954.5 H1579.5"/></g>
<g fill="none" stroke="#6a6a6a" stroke-width="1"><rect x="1613.5" y="944.5" width="16" height="14"/><rect x="1617.5" y="946.5" width="8" height="10"/><path d="M1619.3,949.5 H1623.8 M1619.3,951.5 H1623.8 M1619.3,953.5 H1623.8"/></g>
<g fill="none" stroke="#6a6a6a" stroke-width="1"><rect x="1663.5" y="944.5" width="16" height="14"/><path d="M1668.5,944.5 V953.5 H1663.5 M1673.5,944.5 V953.5 H1668.5"/></g>
<rect x="1704" y="951" width="9.5" height="1.3" fill="#444" />
<rect x="1720" y="951.6" width="125" height="1.2" fill="#444" />
<rect x="1780" y="945" width="6" height="14" fill="#444" />
<rect x="1851" y="950.8" width="9.5" height="1.3" fill="#444" />
<rect x="1855.1" y="947" width="1.3" height="9" fill="#444" />
<text x="1877.28" y="957.00" font-size="13" fill="#555" textLength="31.06" lengthAdjust="spacingAndGlyphs" >100%</text>
</svg>
</body></html>
